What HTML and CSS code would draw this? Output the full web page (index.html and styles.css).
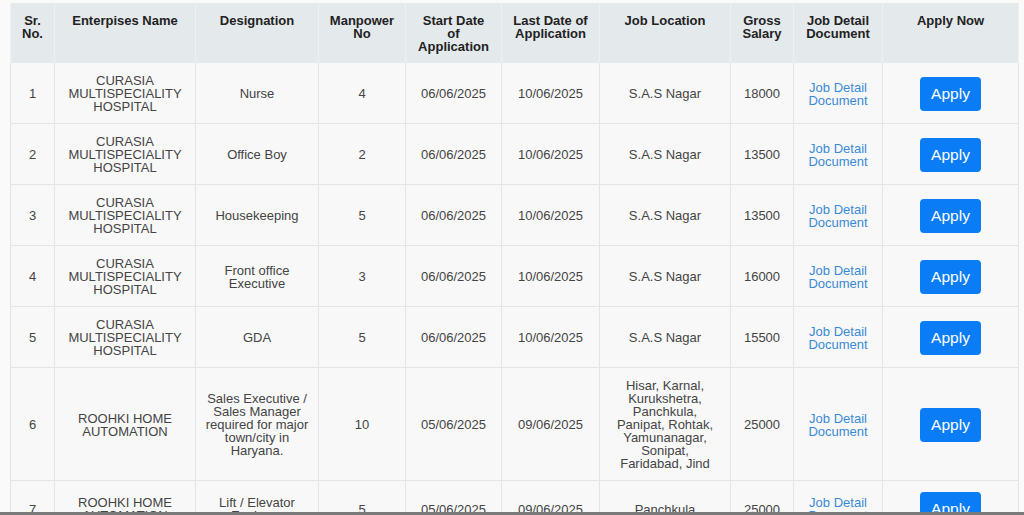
FILE: index.html
```html
<!DOCTYPE html>
<html lang="en">
<head>
<meta charset="utf-8">
<title>Jobs</title>
<link rel="stylesheet" href="styles.css">
</head>
<body>
<div class="wrap">
<table class="jobs">
<colgroup>
<col class="c1"><col class="c2"><col class="c3"><col class="c4"><col class="c5"><col class="c6"><col class="c7"><col class="c8"><col class="c9"><col class="c10">
</colgroup>
<thead>
<tr>
<th>Sr.<br>No.</th>
<th>Enterpises Name</th>
<th>Designation</th>
<th>Manpower No</th>
<th>Start Date of Application</th>
<th>Last Date of Application</th>
<th>Job Location</th>
<th>Gross Salary</th>
<th>Job Detail Document</th>
<th>Apply Now</th>
</tr>
</thead>
<tbody>
<tr>
<td>1</td><td>CURASIA MULTISPECIALITY HOSPITAL</td><td>Nurse</td><td>4</td><td>06/06/2025</td><td>10/06/2025</td><td class="loc">S.A.S Nagar</td><td>18000</td><td><a class="doc" href="#">Job Detail Document</a></td><td><a class="btn" href="#">Apply</a></td>
</tr>
<tr>
<td>2</td><td>CURASIA MULTISPECIALITY HOSPITAL</td><td>Office Boy</td><td>2</td><td>06/06/2025</td><td>10/06/2025</td><td class="loc">S.A.S Nagar</td><td>13500</td><td><a class="doc" href="#">Job Detail Document</a></td><td><a class="btn" href="#">Apply</a></td>
</tr>
<tr>
<td>3</td><td>CURASIA MULTISPECIALITY HOSPITAL</td><td>Housekeeping</td><td>5</td><td>06/06/2025</td><td>10/06/2025</td><td class="loc">S.A.S Nagar</td><td>13500</td><td><a class="doc" href="#">Job Detail Document</a></td><td><a class="btn" href="#">Apply</a></td>
</tr>
<tr>
<td>4</td><td>CURASIA MULTISPECIALITY HOSPITAL</td><td>Front office Executive</td><td>3</td><td>06/06/2025</td><td>10/06/2025</td><td class="loc">S.A.S Nagar</td><td>16000</td><td><a class="doc" href="#">Job Detail Document</a></td><td><a class="btn" href="#">Apply</a></td>
</tr>
<tr>
<td>5</td><td>CURASIA MULTISPECIALITY HOSPITAL</td><td>GDA</td><td>5</td><td>06/06/2025</td><td>10/06/2025</td><td class="loc">S.A.S Nagar</td><td>15500</td><td><a class="doc" href="#">Job Detail Document</a></td><td><a class="btn" href="#">Apply</a></td>
</tr>
<tr>
<td>6</td><td>ROOHKI HOME AUTOMATION</td><td>Sales Executive / Sales Manager required for major town/city in Haryana.</td><td>10</td><td>05/06/2025</td><td>09/06/2025</td><td class="loc">Hisar, Karnal, Kurukshetra, Panchkula, Panipat, Rohtak, Yamunanagar, Sonipat, Faridabad, Jind</td><td>25000</td><td><a class="doc" href="#">Job Detail Document</a></td><td><a class="btn" href="#">Apply</a></td>
</tr>
<tr>
<td>7</td><td>ROOHKI HOME AUTOMATION</td><td>Lift / Elevator Engineer</td><td>5</td><td>05/06/2025</td><td>09/06/2025</td><td class="loc">Panchkula</td><td>25000</td><td><a class="doc" href="#">Job Detail Document</a></td><td><a class="btn" href="#">Apply</a></td>
</tr>
</tbody>
</table>
</div>
<div class="edge"></div>
</body>
</html>
```
FILE: styles.css
```css
html, body {
  margin: 0;
  padding: 0;
  background: #fafafa;
  font-family: "Liberation Sans", Arial, sans-serif;
  overflow: hidden;
}
.wrap {
  padding: 3px 6px 0 10px;
}
.jobs {
  width: 1008px;
  table-layout: fixed;
  border-collapse: collapse;
  font-size: 13px;
  line-height: 13px;
}
.c1 { width: 44px; }
.c2 { width: 141px; }
.c3 { width: 123px; }
.c4 { width: 87px; }
.c5 { width: 96px; }
.c6 { width: 98px; }
.c7 { width: 131px; }
.c8 { width: 63px; }
.c9 { width: 89px; }
.c10 { width: 136px; }
.jobs th {
  background: #e4e9ec;
  color: #222;
  font-weight: bold;
  vertical-align: top;
  text-align: center;
  padding: 11px 10px 10px;
  height: 39px;
  border-left: 1px solid #eef1f3;
  border-right: 1px solid #eef1f3;
}
.jobs td {
  background: #f8f8f8;
  color: #444;
  text-align: center;
  vertical-align: middle;
  padding: 11px 9px 10px;
  border: 1px solid #e4e4e4;
  border-top: none;
}
.jobs td.loc {
  padding-left: 10px;
  padding-right: 10px;
}
.doc {
  color: #3a8ad6;
  text-decoration: none;
}
.btn {
  display: inline-block;
  background: #0a7cf5;
  color: #fff;
  font-size: 15.5px;
  line-height: 22px;
  padding: 6px 11px;
  border-radius: 4px;
  text-decoration: none;
}
.edge {
  position: fixed;
  left: 0;
  right: 0;
  bottom: 0;
  height: 3px;
  background: #7a7a7a;
}
```
